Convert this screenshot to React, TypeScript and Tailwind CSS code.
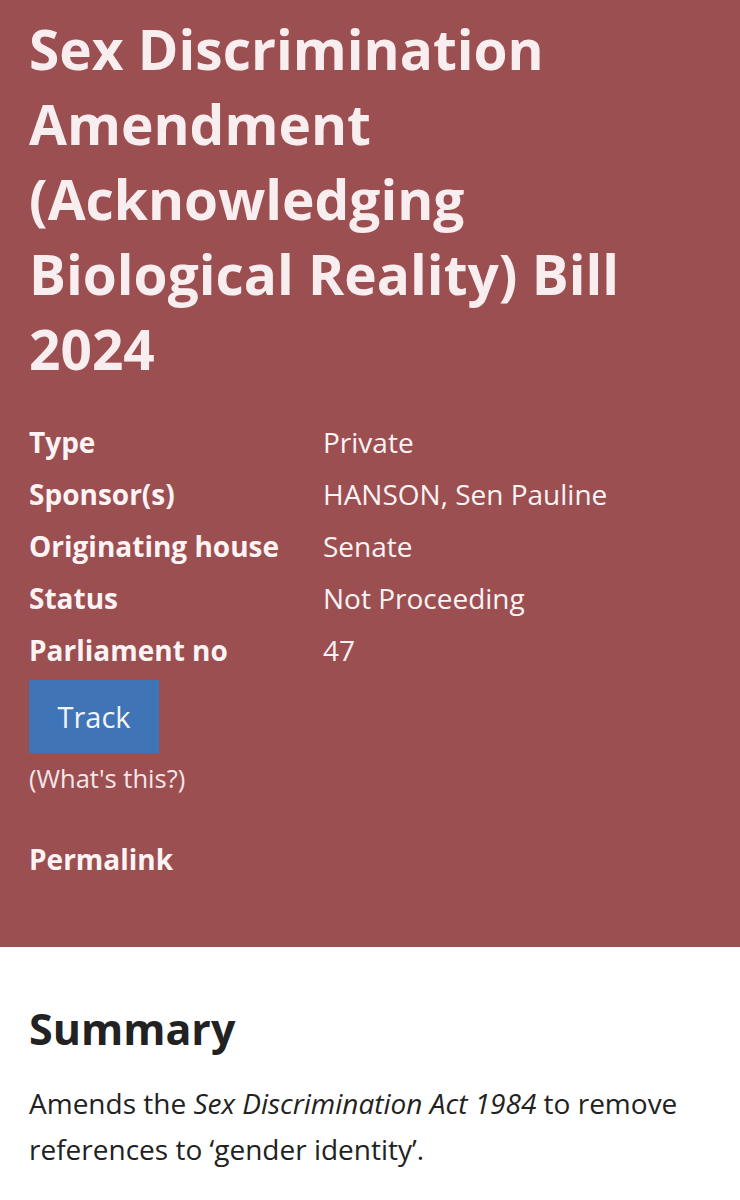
export default function App() {
  const rows: [string, string][] = [
    ["Type", "Private"],
    ["Sponsor(s)", "HANSON, Sen Pauline"],
    ["Originating house", "Senate"],
    ["Status", "Not Proceeding"],
    ["Parliament no", "47"],
  ];

  return (
    <div className="w-[740px] min-h-[1200px] bg-white font-['Open_Sans',sans-serif]">
      {/* bill header */}
      <section className="bg-[#9b4f51] px-[29px] pt-[11px] pb-[68px]">
        <h1 className="text-[55px] leading-[75px] font-bold text-[#f8eef0]">
          Sex Discrimination Amendment (Acknowledging Biological Reality) Bill 2024
        </h1>

        <dl className="mt-[30px] grid grid-cols-[294px_1fr] text-[28px] leading-[52px] text-[#fbf3f4]">
          {rows.map(([label, value]) => (
            <div key={label} className="contents">
              <dt className="font-bold">{label}</dt>
              <dd>{value}</dd>
            </div>
          ))}
        </dl>

        <button className="mt-[4px] h-[73px] w-[130px] bg-[#3f74b6] text-[29px] text-[#f4f4f8]">
          Track
        </button>
        <p className="mt-[7px] text-[25.5px] leading-[36px] text-[#f5e6e8]">(What's this?)</p>

        <p className="mt-[43px] text-[28px] leading-[40px] font-bold text-[#fbf3f4]">Permalink</p>
      </section>

      {/* summary */}
      <section className="px-[29px] pt-[54px] text-[#222222]">
        <h2 className="text-[43px] leading-[56px] font-bold">Summary</h2>
        <p className="mt-[23px] text-[28px] leading-[46px]">
          Amends the <i>Sex Discrimination Act 1984</i> to remove references to ‘gender identity’.
        </p>
      </section>
    </div>
  );
}
